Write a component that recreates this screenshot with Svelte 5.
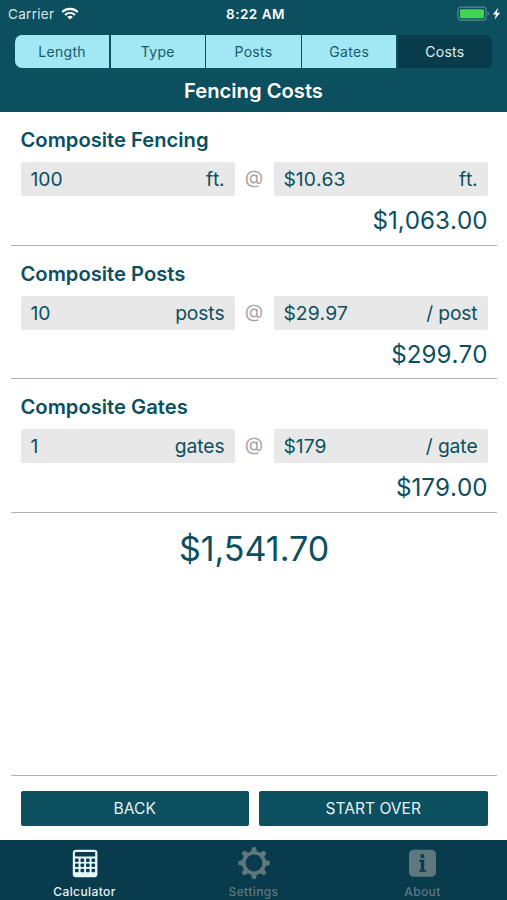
<script>
  let steps = ['Length', 'Type', 'Posts', 'Gates', 'Costs'];
  let activeStep = 'Costs';
  let activeTab = 'Calculator';
  const tabs = ['Calculator', 'Settings', 'About'];
  const teeth = [0, 45, 90, 135, 180, 225, 270, 315];

  const costs = [
    { name: 'Composite Fencing', amount: 100, unit: 'ft.', price: 10.63, per: 'ft.' },
    { name: 'Composite Posts', amount: 10, unit: 'posts', price: 29.97, per: '/ post' },
    { name: 'Composite Gates', amount: 1, unit: 'gates', price: 179, per: '/ gate' }
  ];

  const money = (value) =>
    '$' + value.toLocaleString('en-US', { minimumFractionDigits: 2, maximumFractionDigits: 2 });

  $: total = costs.reduce((sum, item) => sum + item.amount * item.price, 0);
</script>

<div class="screen">
  <header>
    <div class="status">
      <div class="carrier">
        <span>Carrier</span>
        <svg width="18" height="13" viewBox="0 0 18 13" fill="none" stroke="#fff" stroke-width="2.2">
          <path d="M1.2 5C5.6.8 12.4.8 16.8 5" />
          <path d="M4 8c2.9-2.7 7.1-2.7 10 0" />
          <path d="M9 12.6 6.2 9.8c1.6-1.4 4-1.4 5.6 0z" fill="#fff" stroke="none" />
        </svg>
      </div>
      <div class="time">8:22 AM</div>
      <div class="battery">
        <svg width="46" height="16" viewBox="0 0 46 16">
          <rect x="1" y="1.2" width="28" height="13" rx="3" fill="none" stroke="#5c8a94" stroke-width="1.2" />
          <rect x="3" y="3.2" width="24" height="9" rx="1" fill="#43d551" />
          <path d="M30.6 5.5c1.8.6 1.8 3.8 0 4.4z" fill="#5c8a94" />
          <path d="M41.4 1.6 35.8 8.4h3.2l-1.5 5.3 5.6-7h-3.3z" fill="#fff" />
        </svg>
      </div>
    </div>
    <div class="steps">
      {#each steps as step}
        <button class:active={step === activeStep} on:click={() => (activeStep = step)}>{step}</button>
      {/each}
    </div>
    <h1>Fencing Costs</h1>
  </header>

  <main>
    {#each costs as item}
      <section>
        <h2>{item.name}</h2>
        <div class="row">
          <div class="field"><span>{item.amount}</span><span class="unit">{item.unit}</span></div>
          <span class="at">@</span>
          <div class="field"><span>${item.price}</span><span class="unit">{item.per}</span></div>
        </div>
        <div class="subtotal">{money(item.amount * item.price)}</div>
      </section>
    {/each}
    <div class="total">{money(total)}</div>
  </main>

  <div class="actions">
    <button>BACK</button>
    <button>START OVER</button>
  </div>

  <nav>
    {#each tabs as tab}
      <button class:active={tab === activeTab} on:click={() => (activeTab = tab)}>
        <svg width="34" height="34" viewBox="0 0 34 34">
          {#if tab === 'Calculator'}
            <rect x="4.8" y="3.8" width="24.6" height="27.4" rx="3" fill="currentColor" />
            <rect x="7" y="6" width="20.2" height="4.6" rx=".8" fill="#083b4c" />
            {#each [14.2, 19.2, 24.4] as y}
              {#each [8.8, 14.3, 19.8, 25.3] as x}
                <rect x={x - 1.8} y={y - 1.7} width="3.6" height="3.6" rx="1" fill="#083b4c" />
              {/each}
            {/each}
          {:else if tab === 'Settings'}
            <circle cx="17" cy="17" r="10.2" fill="none" stroke="currentColor" stroke-width="3.6" />
            {#each teeth as angle}
              <path d="M13.8 6.5 15.2 1.2h3.6l1.4 5.3z" fill="currentColor" transform="rotate({angle} 17 17)" />
            {/each}
          {:else}
            <rect x="3" y="3.8" width="27" height="27" rx="4.5" fill="currentColor" />
            <g fill="#083b4c">
              <circle cx="16.4" cy="10.2" r="2.1" />
              <path d="M13 13.8h5.2v10.1l1.8.4v1.5h-7v-1.5l1.8-.4v-8.2l-1.8-.4z" />
            </g>
          {/if}
        </svg>
        <span>{tab}</span>
      </button>
    {/each}
  </nav>
</div>

<style>
  :global(body) {
    margin: 0;
    background: #fff;
  }
  .screen {
    display: flex;
    flex-direction: column;
    width: 507px;
    height: 900px;
    overflow: hidden;
    font-family: Inter, "Liberation Sans", sans-serif;
    color: #0c4f60;
  }
  button {
    font: inherit;
    border: 0;
    padding: 0;
    cursor: pointer;
  }
  header {
    box-sizing: border-box;
    height: 112px;
    flex: none;
    background: #0c4f5f;
    color: #fff;
  }
  .status {
    display: grid;
    grid-template-columns: 1fr auto 1fr;
    align-items: center;
    height: 27px;
    padding: 0 4px 0 8px;
    font-size: 13.5px;
  }
  .carrier {
    display: flex;
    align-items: center;
    gap: 7px;
    color: #d9e7ea;
    letter-spacing: 0.3px;
  }
  .time {
    font-size: 13.5px;
    font-weight: 600;
    letter-spacing: 0.5px;
  }
  .battery {
    display: flex;
    justify-content: flex-end;
  }
  .steps {
    display: grid;
    grid-template-columns: repeat(5, 1fr);
    gap: 1.4px;
    height: 33px;
    margin: 8px 15px 0;
    border-radius: 7px;
    overflow: hidden;
  }
  .steps button {
    background: #a1e7f4;
    color: #1c5a6b;
    font-size: 14px;
    letter-spacing: 0.3px;
  }
  .steps button.active {
    background: #083c4d;
    color: #e4eef0;
  }
  h1 {
    margin: 0;
    font-size: 20.2px;
    line-height: 45px;
    font-weight: 600;
    text-align: center;
  }
  main {
    flex: 1;
    padding: 0 10px 0 11px;
  }
  section {
    box-sizing: border-box;
    height: 133.6px;
    padding: 16px 9.5px 0;
    border-bottom: 1.5px solid #b0b0b0;
  }
  h2 {
    margin: 0;
    font-size: 20.2px;
    line-height: 24px;
    font-weight: 600;
  }
  .row {
    display: flex;
    align-items: center;
    margin-top: 10px;
  }
  .field {
    box-sizing: border-box;
    display: flex;
    justify-content: space-between;
    align-items: center;
    flex: 1;
    height: 34px;
    padding: 0 10px;
    border-radius: 2px;
    background: #e8e8e8;
    font-size: 19.3px;
    font-kerning: none;
  }
  .unit {
    letter-spacing: -0.15px;
  }
  .at {
    width: 39px;
    text-align: center;
    font-size: 19px;
    line-height: 32px;
    padding-bottom: 2px;
    color: #a5a5a5;
  }
  .subtotal {
    margin-top: 9px;
    font-size: 24.2px;
    line-height: 32px;
    text-align: right;
    font-kerning: none;
  }
  .total {
    margin-top: 14px;
    font-size: 34px;
    line-height: 44px;
    text-align: center;
  }
  .actions {
    box-sizing: border-box;
    display: flex;
    gap: 10px;
    height: 65px;
    margin: 0 10px 0 11px;
    padding: 15px 9.5px 14px;
    border-top: 1.5px solid #b0b0b0;
  }
  .actions button {
    flex: 1;
    border-radius: 2px;
    background: #0c4f5f;
    color: #e6f3f5;
    font-size: 15.6px;
  }
  nav {
    display: grid;
    grid-template-columns: repeat(3, 1fr);
    height: 60px;
    background: #083b4c;
  }
  nav button {
    display: flex;
    flex-direction: column;
    align-items: center;
    padding-top: 6px;
    background: none;
    color: #5f7880;
    font-size: 12px;
    font-weight: 500;
    letter-spacing: 0.4px;
  }
  nav button.active {
    color: #e8f5f8;
  }
  nav span {
    margin-top: 5px;
    line-height: 14px;
  }
</style>
